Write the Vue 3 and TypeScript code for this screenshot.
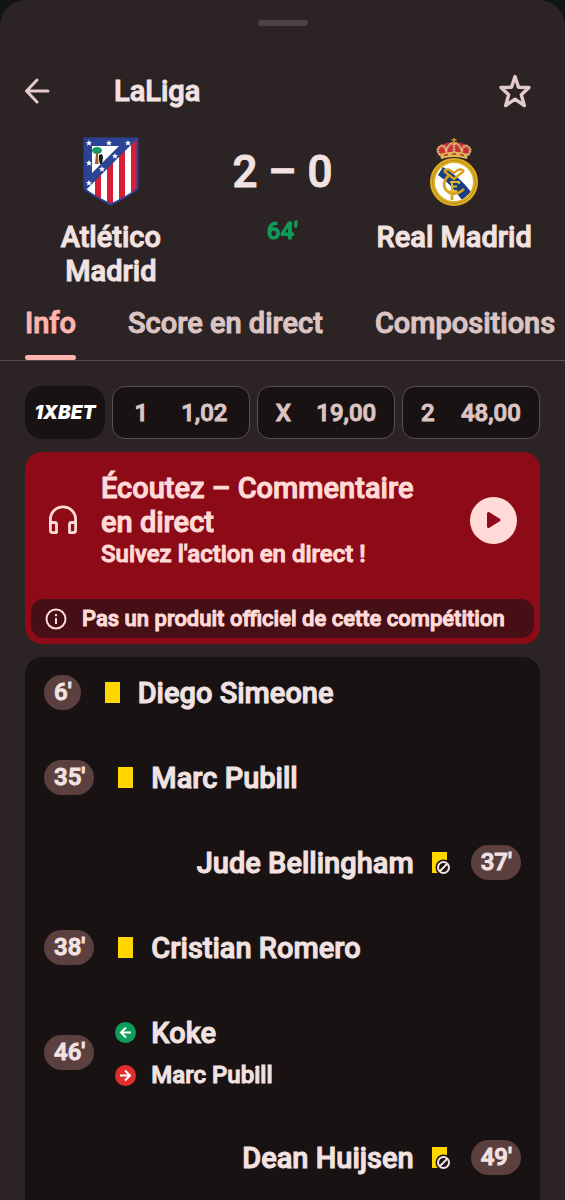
<script setup lang="ts">
type Side = 'home' | 'away'
type Kind = 'yellow' | 'yellow-bench' | 'sub'

interface MatchEvent {
  minute: string
  side: Side
  kind: Kind
  player: string
  playerOut?: string
}

const tabs = ['Info', 'Score en direct', 'Compositions']

const odds = [
  { label: '1', value: '1,02' },
  { label: 'X', value: '19,00' },
  { label: '2', value: '48,00' },
]

const events: MatchEvent[] = [
  { minute: "6'", side: 'home', kind: 'yellow', player: 'Diego Simeone' },
  { minute: "35'", side: 'home', kind: 'yellow', player: 'Marc Pubill' },
  { minute: "37'", side: 'away', kind: 'yellow-bench', player: 'Jude Bellingham' },
  { minute: "38'", side: 'home', kind: 'yellow', player: 'Cristian Romero' },
  { minute: "46'", side: 'home', kind: 'sub', player: 'Koke', playerOut: 'Marc Pubill' },
  { minute: "49'", side: 'away', kind: 'yellow-bench', player: 'Dean Huijsen' },
]
</script>

<template>
  <main class="sheet">
    <div class="handle"></div>

    <header class="topbar">
      <button class="icon-button" type="button" aria-label="Retour">
        <svg width="26" height="26" viewBox="0 0 26 26" fill="none" stroke="currentColor" stroke-width="3" stroke-linecap="round" stroke-linejoin="round">
          <path d="M24 13H2.500M13 2L2.500 13L13 24" />
        </svg>
      </button>
      <h1 class="competition">LaLiga</h1>
      <button class="icon-button" type="button" aria-label="Ajouter aux favoris">
        <svg width="32" height="34" viewBox="0 0 32 34" fill="none" stroke="currentColor" stroke-width="3.400" stroke-linejoin="round">
          <path d="M16 2.500L19.500 13.200L30 13.500L22.300 20.700L25.300 31.500L16 25.200L6.700 31.500L9.700 20.700L2 13.500L12.500 13.200Z" />
        </svg>
      </button>
    </header>

    <section class="scoreboard">
      <div class="team">
        <svg class="crest" width="56" height="70" viewBox="0 0 56 70">
          <defs>
            <clipPath id="shield"><path d="M1 1H55V51Q53 55 28 68Q3 55 1 51Z" /></clipPath>
          </defs>
          <g clip-path="url(#shield)">
            <rect width="56" height="70" fill="#fff" />
            <path d="M12 38h6v32H12zM24 26h6v44H24zM36 14h6v56H36zM48 0h6v70H48z" fill="#d81e34" />
            <path d="M0 0H56L0 56Z" fill="#2b4395" />
            <path d="M9 9H36L9 36Z" fill="#fff" />
          </g>
          <ellipse cx="14" cy="13.500" rx="5" ry="3.500" fill="#139b62" />
          <path d="M13 16h2l.5 11H12z" fill="#9b5a2b" />
          <path d="M16 18l3-1 1 3-1 7h-2l-1-4z" fill="#17171b" />
          <g fill="#fff">
            <path id="st" d="M6 3l.9 2 2.100.2-1.600 1.400.5 2.100L6 7.600l-1.900 1.100.5-2.100L3 5.200l2.100-.2z" />
            <use href="#st" x="20" /><use href="#st" x="39" />
            <use href="#st" y="20" /><use href="#st" y="40" />
            <use href="#st" x="26" y="13" /><use href="#st" x="13" y="26" />
          </g>
          <path d="M1.500 1.500H54.500V51Q53 55 28 67.500Q3 55 1.500 51Z" fill="none" stroke="#2b4395" stroke-width="2" />
        </svg>
        <h2 class="team-name">Atlético Madrid</h2>
      </div>
      <div class="result">
        <strong class="score">2 – 0</strong>
        <span class="clock">64'</span>
      </div>
      <div class="team">
        <svg class="crest" width="50" height="70" viewBox="0 0 50 70">
          <path d="M11 19Q5 12 12 8Q18 5 25 5Q32 5 38 8Q45 12 39 19Z" fill="#c92e3c" />
          <path d="M11 18Q6 12 12 9Q18 8 17 18M39 18Q44 12 38 9Q32 8 33 18M17 14Q20 6 25 6Q30 6 33 14M25 6V18" fill="none" stroke="#d9bd74" stroke-width="2.400" stroke-dasharray="2 .6" />
          <path d="M25 1V7M22.500 3H27.500" stroke="#c99b2c" stroke-width="1.500" />
          <path d="M11 17Q25 12 39 17L38 22Q25 18 12 22Z" fill="#dfb453" />
          <path d="M15 18.500L19 17.500M23 17H27M31 17.500L35 18.500" stroke="#bd3140" stroke-width="1.500" />
          <circle cx="25" cy="45" r="21" fill="#fff" />
          <path d="M14 30L9 38Q21 46 33 63L42 55Q31 40 14 30Z" fill="#173d83" />
          <circle cx="25" cy="45" r="21.500" fill="none" stroke="#ddad22" stroke-width="5" />
          <circle cx="25" cy="45" r="21.500" fill="none" stroke="#b98c1c" stroke-width="1" />
          <path d="M15 34L25 42L35 34M15 34Q19 30 25 36Q31 30 35 34" fill="none" stroke="#d6a41e" stroke-width="2.400" />
          <path d="M20 38Q12 46 17 53Q25 61 35 52M23 57V63" fill="none" stroke="#d6a41e" stroke-width="2.800" />
          <path d="M23 45V54M21 45H30V47M23 49.500H28M21 54H28" fill="none" stroke="#e3b431" stroke-width="2" />
        </svg>
        <h2 class="team-name">Real Madrid</h2>
      </div>
    </section>

    <nav class="tabs">
      <a v-for="(tab, i) in tabs" :key="tab" href="#" class="tab" :class="{ active: i === 0 }">{{ tab }}</a>
    </nav>

    <div class="content">
      <section class="odds">
        <a class="bookmaker" href="#">1XBET</a>
        <button v-for="odd in odds" :key="odd.label" class="odd" type="button">
          <span>{{ odd.label }}</span>
          <span>{{ odd.value }}</span>
        </button>
      </section>

      <section class="audio">
        <div class="audio-main">
          <svg class="headphones" width="30" height="30" viewBox="0 0 30 30" fill="none" stroke="currentColor" stroke-width="2.800" stroke-linejoin="round">
            <path d="M2.400 18V14.400A12.600 12.600 0 0 1 27.600 14.400V18" />
            <path d="M2.400 17.500H6.500Q8.500 17.500 8.500 19.500V27.600H4.400Q2.400 27.600 2.400 25.600Z" />
            <path d="M27.600 17.500H23.500Q21.500 17.500 21.500 19.500V27.600H25.600Q27.600 27.600 27.600 25.600Z" />
          </svg>
          <div class="audio-text">
            <h3 class="audio-title">Écoutez – Commentaire en direct</h3>
            <p class="audio-sub">Suivez l'action en direct !</p>
          </div>
          <button class="play" type="button" aria-label="Écouter">
            <svg width="16" height="18" viewBox="0 0 16 18" fill="currentColor" stroke="currentColor" stroke-width="3" stroke-linejoin="round">
              <path d="M2.500 2.500V15.500L13 9Z" />
            </svg>
          </button>
        </div>
        <p class="notice">
          <svg width="22" height="22" viewBox="0 0 22 22" fill="none" stroke="currentColor" stroke-width="2">
            <circle cx="11" cy="11" r="9.500" />
            <path d="M11 10V16M11 6V8.200" />
          </svg>
          Pas un produit officiel de cette compétition
        </p>
      </section>

      <ul class="events">
        <li v-for="event in events" :key="event.minute" class="event" :class="event.side">
          <span class="minute">{{ event.minute }}</span>
          <div class="lines">
            <div class="line">
              <svg v-if="event.kind === 'yellow'" width="21" height="21" viewBox="0 0 21 21">
                <rect x="3" width="15" height="21" fill="#ffd600" />
              </svg>
              <svg v-else-if="event.kind === 'yellow-bench'" width="21" height="23" viewBox="0 0 21 23">
                <rect x="3" y="1" width="15" height="21" fill="#ffd600" />
                <circle cx="14.500" cy="16.500" r="8" fill="#191213" />
                <circle cx="14.500" cy="16.500" r="5.500" fill="none" stroke="#f4e4e3" stroke-width="2" />
                <path d="M10.800 20.200L18.200 12.800" stroke="#f4e4e3" stroke-width="2" />
              </svg>
              <svg v-else width="21" height="21" viewBox="0 0 21 21" fill="none" stroke="#fff" stroke-width="2">
                <circle cx="10.500" cy="10.500" r="10.500" fill="#0d9d58" stroke="none" />
                <path d="M16 10.500H6M11 5.500L6 10.500L11 15.500" />
              </svg>
              <span class="player">{{ event.player }}</span>
            </div>
            <div v-if="event.playerOut" class="line out">
              <svg width="21" height="21" viewBox="0 0 21 21" fill="none" stroke="#fff" stroke-width="2">
                <circle cx="10.500" cy="10.500" r="10.500" fill="#e02d2d" stroke="none" />
                <path d="M5 10.500H15M10 5.500L15 10.500L10 15.500" />
              </svg>
              <span class="player">{{ event.playerOut }}</span>
            </div>
          </div>
        </li>
      </ul>
    </div>
  </main>
</template>

<style>
body {
  margin: 0;
  background: #101414;
}
</style>

<style scoped>
* {
  box-sizing: border-box;
}

h1,
h2,
h3,
p,
ul {
  margin: 0;
  padding: 0;
  font-size: inherit;
  font-weight: inherit;
}

button {
  font: inherit;
  color: inherit;
  border: 0;
  padding: 0;
  background: none;
  cursor: pointer;
}

a {
  color: inherit;
  text-decoration: none;
}

svg {
  display: block;
  flex: none;
}

.sheet {
  display: flex;
  flex-direction: column;
  min-height: 100vh;
  padding-top: 20px;
  overflow: hidden;
  border-radius: 26px 26px 0 0;
  background: #2c2324;
  color: #f2e2e1;
  font-family: Roboto, "Liberation Sans", sans-serif;
  font-size: 29px;
  font-weight: 500;
  line-height: 34px;
  -webkit-text-stroke: 1px currentColor;
}

.handle {
  width: 50px;
  height: 6px;
  margin: 0 auto;
  border-radius: 3px;
  background: #4d4344;
}

.topbar {
  display: flex;
  align-items: center;
  height: 48px;
  margin-top: 41px;
  padding: 0 34px 0 24px;
}

.icon-button {
  color: #e3cbca;
}

.competition {
  flex: 1;
  margin-left: 64px;
}

.scoreboard {
  display: grid;
  grid-template-columns: repeat(3, 1fr);
  padding: 22px 25px 0;
  text-align: center;
}

.team,
.result {
  display: flex;
  flex-direction: column;
  align-items: center;
}

.team-name {
  margin-top: 13px;
}

.score {
  margin-top: 8px;
  font-size: 44px;
  font-weight: 500;
  line-height: 54px;
}

.clock {
  margin-top: 17px;
  color: #0d9d58;
  font-size: 24px;
  line-height: 30px;
}

.tabs {
  display: flex;
  gap: 52px;
  padding: 18px 25px 0;
  border-bottom: 1px solid #5a4f50;
  color: #dcc4c3;
  white-space: nowrap;
}

.tab {
  padding-bottom: 16px;
  border-bottom: 4px solid transparent;
}

.active {
  display: flex;
  flex-direction: column;
  padding-bottom: 0;
  border: 0;
  color: #ffb3ae;
}

.active::after {
  content: "";
  height: 5px;
  margin-top: auto;
  border-radius: 3px;
  background: #ffb3ae;
}

.content {
  display: flex;
  flex: 1;
  flex-direction: column;
  gap: 13px;
  padding: 25px 25px 0;
}

.odds {
  display: flex;
  gap: 7px;
  height: 53px;
  color: #dcc4c3;
  font-size: 24px;
}

.bookmaker {
  display: flex;
  align-items: center;
  justify-content: center;
  width: 80px;
  border-radius: 17px;
  background: #191213;
  color: #fff;
  font-family: Inter, sans-serif;
  font-size: 19px;
  font-style: italic;
  font-weight: 900;
  -webkit-text-stroke: 0;
}

.odd {
  display: flex;
  flex: 1;
  align-items: center;
  justify-content: space-around;
  padding: 0 5px;
  border: 1px solid #5a4f50;
  border-radius: 13px;
  background: #191213;
}

.audio {
  padding: 19px 6px 6px;
  border-radius: 17px;
  background: #8c0b17;
  color: #ffdad7;
}

.audio-main {
  display: flex;
  align-items: center;
  padding: 0 17px;
}

.audio-text {
  flex: 1;
  margin: 0 40px 0 23px;
}

.audio-sub {
  font-size: 24px;
  line-height: 30px;
}

.play {
  display: flex;
  align-items: center;
  justify-content: center;
  width: 47px;
  height: 47px;
  border-radius: 50%;
  background: #ffdad7;
  color: #8c0b17;
}

.notice {
  display: flex;
  align-items: center;
  gap: 15px;
  height: 39px;
  margin-top: 30px;
  padding: 0 14px;
  border-radius: 13px;
  background: #450f15;
  font-size: 22px;
  white-space: nowrap;
}

.events {
  display: flex;
  flex: 1;
  flex-direction: column;
  gap: 50px;
  padding: 18px 19px 24px;
  border-radius: 17px 17px 0 0;
  background: #191213;
  list-style: none;
}

.event {
  display: flex;
  align-items: center;
  gap: 21px;
}

.lines {
  display: flex;
  flex-direction: column;
  gap: 10px;
}

.line {
  display: flex;
  align-items: center;
  gap: 15px;
  height: 35px;
}

.out {
  height: 30px;
  font-size: 24px;
}

.away,
.away .line {
  flex-direction: row-reverse;
}

.minute {
  padding: 0 9px 0 10px;
  border-radius: 18px;
  background: #5b403f;
  font-size: 24px;
  line-height: 35px;
}
</style>
